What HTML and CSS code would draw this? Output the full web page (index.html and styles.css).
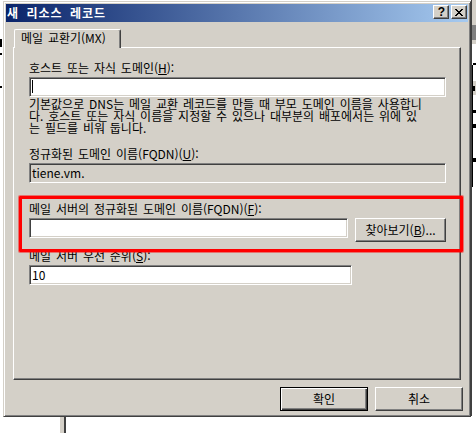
FILE: index.html
```html
<!DOCTYPE html>
<html lang="ko">
<head>
<meta charset="utf-8">
<title>새 리소스 레코드</title>
<link rel="stylesheet" href="styles.css">
</head>
<body>
<div class="desktop">
  <div class="bg-left"><i class="mark m1"></i><i class="mark m2"></i><i class="mark m3"></i></div>
  <div class="bg-right">
    <i class="frag f1"></i><i class="frag f2"></i><i class="frag f3"></i><i class="frag f4"></i><i class="frag f5"></i><i class="vline"></i>
  </div>
  <div class="bg-bottom"></div>

  <div class="dialog">
    <div class="titlebar">
      <span class="title">새 리소스 레코드</span>
      <div class="caption-buttons">
        <span class="cap-btn help">?</span>
        <span class="cap-btn close">
          <svg width="8" height="7" viewBox="0 0 8 7" shape-rendering="crispEdges">
            <path d="M0 0h2v1H0zM6 0h2v1H6zM1 1h2v1H1zM5 1h2v1H5zM2 2h4v1H2zM3 3h2v1H3zM2 4h4v1H2zM1 5h2v1H1zM5 5h2v1H5zM0 6h2v1H0zM6 6h2v1H6z" fill="#000"/>
          </svg>
        </span>
      </div>
    </div>

    <div class="client">
      <div class="tabs"><div class="tab">메일 교환기(MX)</div></div>
      <div class="panel">
        <div class="label">호스트 또는 자식 도메인(<u>H</u>):</div>
        <div class="field wide"><span class="caret"></span></div>
        <p class="note">기본값으로 DNS는 메일 교환 레코드를 만들 때 부모 도메인 이름을 사용합니<br>다. 호스트 또는 자식 이름을 지정할 수 있으나 대부분의 배포에서는 위에 있<br>는 필드를 비워 둡니다.</p>
        <div class="label l2">정규화된 도메인 이름(FQDN)(<u>U</u>):</div>
        <div class="field wide disabled">tiene.vm.</div>
        <div class="label l3">메일 서버의 정규화된 도메인 이름(FQDN)(<u>F</u>):</div>
        <div class="row">
          <div class="field narrow"></div>
          <div class="btn browse">찾아보기(<u>B</u>)...</div>
        </div>
        <div class="label l4">메일 서버 우선 순위(<u>S</u>):</div>
        <div class="field narrow">10</div>
        <div class="highlight"></div>
      </div>
      <div class="actions">
        <div class="btn default">확인</div>
        <div class="btn">취소</div>
      </div>
    </div>
  </div>
</div>
</body>
</html>
```

FILE: styles.css
```css
* { box-sizing: border-box; }
html, body { margin: 0; padding: 0; }
body {
  width: 476px;
  height: 433px;
  overflow: hidden;
  background: #ffffff;
  font-family: "Noto Sans CJK KR", "Noto Sans CJK SC", sans-serif;
  font-size: 12px;
  color: #000;
  word-spacing: 1.5px;
}
u { text-decoration: underline; text-underline-offset: 1px; }

.desktop {
  position: relative;
  width: 476px;
  height: 433px;
  padding: 1px 0 0 3px;
}

/* background desktop windows */
.bg-left { position: absolute; left: 0; top: 0; width: 3px; height: 433px; }
.mark { position: absolute; left: 0; width: 2px; background: #000; }
.m1 { top: 39px; height: 8px; }
.m2 { top: 53px; height: 2px; }
.m3 { top: 86px; height: 2px; }

.bg-right {
  position: absolute;
  left: 471px; top: 0;
  width: 5px; height: 416px;
  border-left: 1px solid #404040;
  background: linear-gradient(to bottom, #d4d0c8 0 25px, #808080 25px 40px, #d4d0c8 40px 44px, #ffffff 44px 47px, #ffffff 47px 81px, #d4d0c8 81px 95px, #ffffff 95px);
}
.frag { position: absolute; left: 1px; width: 3px; background: #000; }
.f1 { top: 63px; height: 2px; }
.f2 { top: 86px; height: 5px; width: 2px; }
.f3 { top: 110px; height: 3px; }
.f4 { top: 124px; height: 4px; }
.f5 { top: 158px; height: 4px; }
.vline { position: absolute; left: 0; top: 65px; width: 1px; height: 122px; background: #000; }

.bg-bottom {
  position: absolute;
  left: 60px; top: 417px;
  width: 6px; height: 16px;
  background: #d4d0c8;
  border-right: 2px solid #404040;
}

/* dialog window */
.dialog {
  position: relative;
  z-index: 1;
  width: 468px;
  height: 416px;
  background: #d4d0c8;
  border: 1px solid;
  border-color: #d4d0c8 #404040 #404040 #d4d0c8;
  box-shadow: inset 1px 1px #ffffff, inset -1px -1px #808080;
  padding: 2px;
  display: flex;
  flex-direction: column;
}

.titlebar {
  height: 18px;
  flex: none;
  display: flex;
  align-items: center;
  padding-left: 1px;
  background: linear-gradient(to right, #0a246a, #a6caf0);
}
.title {
  color: #fff;
  font-weight: bold;
  font-size: 12px;
  line-height: 12px;
  letter-spacing: 1px;
  word-spacing: 3px;
}
.caption-buttons {
  margin-left: auto;
  align-self: flex-start;
  margin-top: 1px;
  padding-right: 1px;
  display: flex;
  gap: 2px;
}
.cap-btn {
  width: 16px;
  height: 14px;
  background: #d4d0c8;
  border: 1px solid;
  border-color: #ffffff #404040 #404040 #ffffff;
  box-shadow: inset -1px -1px #808080;
  display: flex;
  align-items: center;
  justify-content: center;
}
.help {
  font-family: "Liberation Sans", sans-serif;
  font-weight: bold;
  font-size: 12px;
  line-height: 12px;
  padding-left: 1px;
}
.close svg { display: block; margin-left: 0; }

.client {
  flex: 1;
  padding: 7px 7px 0 7px;
  display: flex;
  flex-direction: column;
}

.tabs { display: flex; height: 18px; position: relative; z-index: 2; }
.tab {
  margin-left: 1px;
  width: 107px;
  height: 19px;
  background: #d4d0c8;
  border-top: 1px solid #fff;
  border-left: 1px solid #fff;
  border-right: 1px solid #404040;
  box-shadow: inset -1px 0 #808080;
  border-radius: 2px 2px 0 0;
  padding: 1px 0 0 6px;
  line-height: 13px;
  white-space: nowrap;
}

.panel {
  position: relative;
  width: 448px;
  height: 333px;
  flex: none;
  border: 1px solid;
  border-color: #ffffff #404040 #404040 #ffffff;
  box-shadow: inset -1px -1px #808080;
  padding: 14px 14px 0 15px;
}

.label { line-height: 12px; height: 12px; white-space: nowrap; }
.l2 { margin-top: 14px; }
.l3 { margin-top: 20px; }
.l4 { margin-top: 8px; }

.field {
  margin-top: 3px;
  height: 20px;
  background: #fff;
  border: 1px solid;
  border-color: #808080 #ffffff #ffffff #808080;
  box-shadow: inset 1px 1px #404040, inset -1px -1px #d4d0c8;
  padding: 0 2px;
  line-height: 18px;
  white-space: nowrap;
}
.wide { width: 417px; }
.narrow { width: 323px; }
.disabled { background: #d4d0c8; }
.caret { display: block; width: 1px; height: 13px; margin-top: 2px; background: #000; }

.note {
  margin: 1px 0 0;
  line-height: 12px;
  white-space: nowrap;
}

.row { display: flex; align-items: flex-start; gap: 7px; margin-top: 3px; }
.row .field { margin-top: 0; }

.btn {
  height: 24px;
  background: #d4d0c8;
  border: 1px solid;
  border-color: #ffffff #404040 #404040 #ffffff;
  box-shadow: inset -1px -1px #808080;
  display: flex;
  align-items: center;
  justify-content: center;
  line-height: 12px;
  white-space: nowrap;
}
.browse { width: 92px; }

.actions {
  display: flex;
  justify-content: flex-end;
  gap: 7px;
  margin: 7px -2px 0 0;
}
.actions .btn { width: 88px; }
.btn.default {
  border: 1px solid #000;
  box-shadow: inset 1px 1px #ffffff, inset -1px -1px #404040, inset -2px -2px #808080;
}

/* red annotation frame over the form */
.highlight {
  position: absolute;
  left: 5px;
  top: 148px;
  width: 444px;
  height: 56px;
  border: 3px solid #ff0000;
  border-radius: 1px;
  box-shadow: 0 0 0 1px rgba(255, 0, 0, 0.45);
  pointer-events: none;
}
```
